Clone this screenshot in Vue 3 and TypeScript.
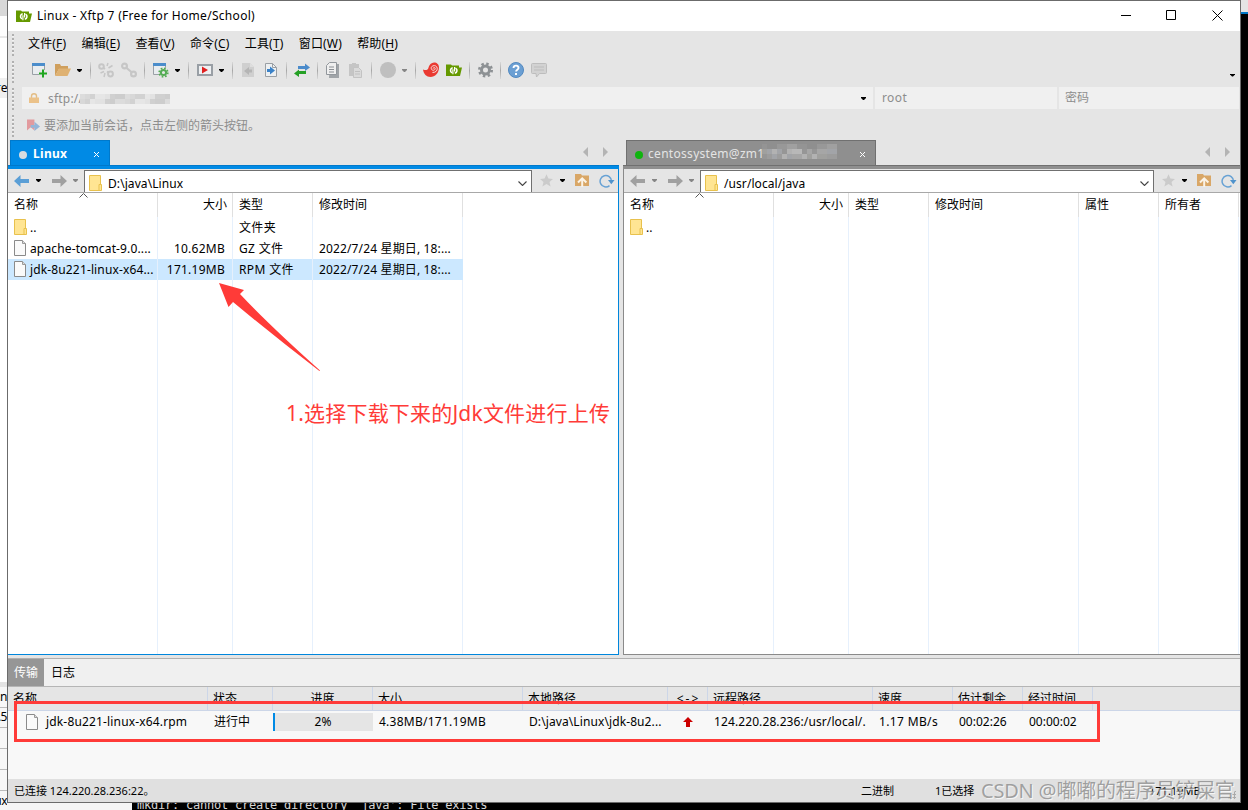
<script setup lang="ts">
interface Tool { kind: 'ic' | 'sep' | 'caret'; id?: string; wide?: boolean; dim?: boolean }
interface Row { name: string; icon: string; size: string; type: string; time: string; selected?: boolean }
interface Block { x: number; y: number; w: number; h: number; c: string }

const ic = (id: string, wide = false): Tool => ({ kind: 'ic', id, wide })
const sep: Tool = { kind: 'sep' }
const caret: Tool = { kind: 'caret' }

const menus = [
  ['文件', 'F'], ['编辑', 'E'], ['查看', 'V'], ['命令', 'C'], ['工具', 'T'], ['窗口', 'W'], ['帮助', 'H'],
]

const tools: Tool[] = [
  ic('new', true), ic('folder'), caret, sep,
  ic('unlink'), ic('link'), sep,
  ic('wingear', true), caret, sep,
  ic('play', true), caret, sep,
  ic('pageleft'), ic('pageright'), sep,
  ic('swap'), sep,
  ic('copy'), ic('paste'), sep,
  ic('disc', true), { kind: 'caret', dim: true }, sep,
  ic('spiral'), ic('xftp'), sep,
  ic('gear'), sep,
  ic('help'), ic('chat'),
]

const rows: Row[] = [
  { name: '..', icon: 'dir', size: '', type: '文件夹', time: '' },
  { name: 'apache-tomcat-9.0....', icon: 'file', size: '10.62MB', type: 'GZ 文件', time: '2022/7/24 星期日, 18:...' },
  { name: 'jdk-8u221-linux-x64...', icon: 'file', size: '171.19MB', type: 'RPM 文件', time: '2022/7/24 星期日, 18:...', selected: true },
]

const queueHeads = ['名称', '状态', '进度', '大小', '本地路径', '<->', '远程路径', '速度', '估计剩余', '经过时间']

const shades = ['#dcdcdc', '#d2d2d2', '#e2e2e2', '#cdcdcd', '#d8d8d8', '#e6e6e6', '#d0d0d0']
const addressMask: Block[] = []
for (let i = 0; i < 18; i++) {
  for (let j = 0; j < 2; j++) {
    addressMask.push({ x: i * 5, y: j * 5, w: 5, h: 5, c: shades[(i * 3 + j * 4 + (i % 4)) % 7] })
  }
}
const topGreys = ['#949494', '#a0a0a0', '#989898', '#8f8f8f']
const greys = ['#a6a6a6', '#9c9c9c', '#b2b2b2', '#a0a09e', '#b8b8b8', '#a2a4a8', '#969696']
const tabMask: Block[] = []
for (let i = 0; i < 15; i++) {
  for (let j = 0; j < 3; j++) {
    tabMask.push({ x: i * 5, y: j * 5, w: 5, h: 5, c: j === 0 ? topGreys[(i * 3 + (i >> 1)) % 4] : greys[(i * i + j * 3 + (i % 3)) % 7] })
  }
}
</script>

<template>
  <div class="desk">
    <svg class="sprite" aria-hidden="true">
      <symbol id="new" viewBox="0 0 16 16"><path d="M.5 1.500h12v11H.5z" fill="#e9edf0" stroke="#9aa0a6" /><path d="M0 1h13v3H0z" fill="#4b8dcb" /><path d="M7 8h8v7H7z" fill="#e5e5e5" /><path d="M11 7.500v8M7 11.500h8" stroke="#1fa51f" stroke-width="2" /></symbol>
      <symbol id="folder" viewBox="0 0 16 16"><path d="M0 2h5l1 2h7v3H4L0 14z" fill="#cf9f5d" /><path d="M4 6.500h12L12.500 14H0z" fill="#dfb273" /></symbol>
      <symbol id="unlink" viewBox="0 0 16 16"><g fill="none" stroke="#c6c6c6" stroke-width="2"><circle cx="3.500" cy="4.500" r="2.300" /><circle cx="12.500" cy="12" r="2.400" /><path d="M5.500 6l1.500 1M9 9.500l1.500 1" /><path d="M10 1l-1 3M14.500 3.500l-4 2.500M2.500 11l3.500-1.500M6 15l1-4" stroke-width="1.500" /></g></symbol>
      <symbol id="link" viewBox="0 0 16 16"><g fill="none" stroke="#c6c6c6" stroke-width="2.200"><circle cx="3.500" cy="4" r="2.400" /><circle cx="12.500" cy="12" r="2.400" /><path d="M5 5.500l6 5" /></g></symbol>
      <symbol id="wingear" viewBox="0 0 16 16"><path d="M.5 1.500h12v11H.5z" fill="#e9edf0" stroke="#9aa0a6" /><path d="M0 1h13v3H0z" fill="#4b8dcb" /><circle cx="10.500" cy="10.500" r="5" fill="#e5e5e5" /><circle cx="10.500" cy="10.500" r="2.600" fill="none" stroke="#55ad55" stroke-width="2" /><circle cx="10.500" cy="10.500" r="4.300" fill="none" stroke="#55ad55" stroke-width="1.700" stroke-dasharray="1.700 1.677" /></symbol>
      <symbol id="play" viewBox="0 0 16 16"><rect x="1" y="3" width="14" height="10" fill="#eef0f2" stroke="#999fa5" stroke-width="2" /><path d="M5 4.500v7l6-3.500z" fill="#e02020" /></symbol>
      <symbol id="pageleft" viewBox="0 0 16 16"><path d="M2 1h8l4 4v10H2z" fill="#cfcfcf" /><path d="M10 1v4h4" fill="#dedede" /><path d="M4 9l5-4v2.500h3v3H9V13z" fill="#b5b5b5" /></symbol>
      <symbol id="pageright" viewBox="0 0 16 16"><path d="M2.500 1.500h7l4 4v9h-11z" fill="#edf0f2" stroke="#9a9fa4" /><path d="M9.500 1.500v4h4" fill="none" stroke="#9a9fa4" /><path d="M12 8.500l-5-4V7H4v3h3v2.500z" fill="#3b82c8" /></symbol>
      <symbol id="swap" viewBox="0 0 16 16"><path d="M4 4h7V1.500L16 5.500 11 9V7H4z" fill="#4b8bcb" /><path d="M12 9H5V7.500l-5 4L5 15v-3h7z" fill="#25a025" /></symbol>
      <symbol id="copy" viewBox="0 0 16 16"><path d="M5 2h9v14H4z" fill="#a0a4a8" /><path d="M4.500.5h7v12h-10v-9z" fill="#efefef" stroke="#92979c" /><path d="M4 5h5M4 7.500h5M4 10h5" stroke="#8b8f94" /></symbol>
      <symbol id="paste" viewBox="0 0 16 16"><path d="M1 2h3V1h4v1h3v12H1z" fill="#c5c5c5" /><path d="M5.500 5.500h5l3 3v7h-8z" fill="#dadada" stroke="#c3c3c3" /><path d="M7 9.500h5M7 12h5" stroke="#c0c0c0" /></symbol>
      <symbol id="disc" viewBox="0 0 16 16"><circle cx="8" cy="8" r="8" fill="#bfbfbf" /></symbol>
      <symbol id="spiral" viewBox="0 0 16 16"><path d="M0 7.500c3 1 4.600.5 5.200-1C6 2.500 8.500.500 11 .500c3 0 5 2 5 5 0 5.500-4 9.500-8.500 9.500C3.500 15 .5 12 0 7.500z" fill="#ea3a32" /><path d="M9.500 10.500c3.500 0 5-2 4.700-4.300C13.800 2.500 8 3 8.200 6.300c.2 2.700 4 2.500 4 .2 0-1.300-2-1.200-2 0" fill="none" stroke="#f7dedc" stroke-width="1" /></symbol>
      <symbol id="xftp" viewBox="0 0 16 16"><path d="M0 2.500h5l1 1h7v2h3l-2 8.500H0z" fill="#659900" /><path d="M6.700 5.700a2.800 2.800 0 0 0-.7 5.200M8.800 11.300a2.800 2.800 0 0 0 .7-5.200" fill="none" stroke="#fff" stroke-width="1.600" /><path d="M6.900 7.200v5M8.600 5v4.500" stroke="#fff" stroke-width="1.200" /></symbol>
      <symbol id="gear" viewBox="0 0 16 16"><circle cx="8.500" cy="8" r="4" fill="none" stroke="#8d9194" stroke-width="3" /><circle cx="8.500" cy="8" r="6.200" fill="none" stroke="#8d9194" stroke-width="2.600" stroke-dasharray="2.400 2.470" /></symbol>
      <symbol id="help" viewBox="0 0 16 16"><circle cx="8" cy="8" r="7.500" fill="#6b9fd3" stroke="#5289c0" /><path d="M5.500 6c.2-3.200 5.200-3 5 0-.2 1.700-2.400 1.700-2.400 3.500M8 11v2" fill="none" stroke="#fff" stroke-width="1.900" /></symbol>
      <symbol id="chat" viewBox="0 0 16 16"><path d="M1.500 1.500h13q1 0 1 1v8q0 1-1 1H8.500L5.500 15l-.5-3.500H1.500q-1 0-1-1v-8q0-1 1-1z" fill="#d2d2d2" stroke="#bdbdbd" /><path d="M3 5h10M3 8h10" stroke="#bcbcbc" /></symbol>
      <symbol id="dir" viewBox="0 0 13 16"><path d="M.5.500h11v15H.5z" fill="#ffe593" stroke="#e8c14d" /><path d="M10 9.500h2.500v6H10z" fill="#ffe593" stroke="#e8c14d" /></symbol>
      <symbol id="file" viewBox="0 0 12 16"><path d="M.5.500h8l3 3v12H.5z" fill="#fafafa" stroke="#8a8a8a" /><path d="M8.500.500v3h3" fill="#ddd" stroke="#9a9a9a" /></symbol>
      <symbol id="back" viewBox="0 0 15 12"><path d="M0 6l6.500-6v4H15v4H6.500v4z" fill="currentColor" /></symbol>
      <symbol id="fwd" viewBox="0 0 15 12"><path d="M15 6L8.500 0v4H0v4h8.500v4z" fill="currentColor" /></symbol>
      <symbol id="star" viewBox="0 0 13 13"><path d="M6.500.300l1.900 4.200 4.600.4-3.500 3 1.100 4.700-4.100-2.500-4.100 2.500 1.100-4.700-3.500-3 4.600-.4z" fill="#cbcbcb" /></symbol>
      <symbol id="up" viewBox="0 0 14 13"><path d="M0 0h6l1 1.500h7V12H0z" fill="#d9a767" /><path d="M3 8.500L7.200 4.300l4.200 4.200M7.200 5v8" fill="none" stroke="#fbf3e6" stroke-width="2" /></symbol>
      <symbol id="refresh" viewBox="0 0 16 14"><path d="M10.500 11.600A5.700 5.700 0 1 1 12.500 7" fill="none" stroke="#68a2d4" stroke-width="1.500" /><path d="M9 6h6.500l-3.200 4.300z" fill="#4f93cc" /></symbol>
    </svg>

    <div class="behind left">
      <i class="s1"></i><i class="s2"></i><i class="s3"></i><span class="s4"><b>r</b>e</span>
      <i class="s5"></i><span class="s6">.n</span><span class="s7">.5</span><i class="s8"></i><i class="s8"></i><i class="s8"></i><span class="s9">ux</span>
    </div>

    <div class="center">
      <div class="win">
        <header class="title">
          <svg class="i16"><use href="#xftp" /></svg>
          <span class="cap">Linux - Xftp 7 (Free for Home/School)</span>
          <svg class="winbtns" viewBox="0 0 102 11"><path d="M0 5.500h10M45.500.500h9v9h-9zM91.500.500l10 10M101.500.500l-10 10" fill="none" stroke="#000" /></svg>
        </header>

        <section class="bars">
          <div class="grips"><i></i><i></i><i></i><i></i></div>
          <div class="barcol">
            <nav class="menu"><span v-for="m in menus" :key="m[1]">{{ m[0] }}(<u>{{ m[1] }}</u>)</span></nav>
            <div class="tools">
              <template v-for="(t, i) in tools" :key="i">
                <span v-if="t.kind === 'ic'" class="slot" :class="{ wide: t.wide }"><svg class="i16"><use :href="'#' + t.id" /></svg></span>
                <i v-else-if="t.kind === 'sep'" class="sep"></i>
                <i v-else class="caret" :class="{ dim: t.dim }"></i>
              </template>
              <i class="caret more"></i>
            </div>
            <div class="address">
              <div class="field host">
                <svg class="lock" viewBox="0 0 10 10"><path d="M2.500 5V3q0-2.300 2.500-2.300T7.500 3v2" fill="none" stroke="#e3bd85" stroke-width="1.400" /><path d="M0 4.500h10V10H0z" fill="#ebc28a" /></svg>
                <span>sftp://</span>
                <svg class="mask" viewBox="0 0 90 10"><rect v-for="(b, i) in addressMask" :key="i" :x="b.x" :y="b.y" :width="b.w" :height="b.h" :fill="b.c" /></svg>
                <i class="caret"></i>
              </div>
              <div class="field user">root</div>
              <div class="field pass">密码</div>
            </div>
            <div class="hint">
              <svg viewBox="0 0 14 13"><path d="M0 0h8v12l-4-3.500L0 12z" fill="#e29a9e" /><path d="M4 6h4V2.500l6 5-6 5V9H4z" fill="#94b5d8" /></svg>
              <span>要添加当前会话，点击左侧的箭头按钮。</span>
            </div>
          </div>
        </section>

        <main class="panes">
          <section class="pane local">
            <div class="tabs">
              <div class="tab on"><i class="dot"></i><b>Linux</b><svg class="x" viewBox="0 0 7 7"><path d="M1 1l5 5M6 1l-5 5" stroke="#fff" /></svg></div>
              <i class="tl"></i><i class="tr"></i>
            </div>
            <div class="rule"></div>
            <div class="inner">
              <div class="nav">
                <svg class="arr blue"><use href="#back" /></svg><i class="caret"></i>
                <svg class="arr"><use href="#fwd" /></svg><i class="caret dim"></i>
                <div class="combo"><svg class="dir"><use href="#dir" /></svg><span>D:\java\Linux</span><svg class="chev" viewBox="0 0 9 5"><path d="M.5.500l4 4 4-4" fill="none" stroke="#444" stroke-width="1.100" /></svg></div>
                <svg class="star"><use href="#star" /></svg><i class="caret"></i>
                <svg class="up"><use href="#up" /></svg><svg class="refresh"><use href="#refresh" /></svg>
              </div>
              <div class="list">
                <svg class="sort" viewBox="0 0 9 5"><path d="M.5 4.500l4-4 4 4" fill="none" stroke="#555" /></svg>
                <div class="row head"><span>名称</span><span class="num">大小</span><span>类型</span><span>修改时间</span></div>
                <div v-for="r in rows" :key="r.name" class="row" :class="{ sel: r.selected }">
                  <span class="nm"><svg :class="r.icon"><use :href="'#' + r.icon" /></svg>{{ r.name }}</span>
                  <span class="num">{{ r.size }}</span><span class="ty">{{ r.type }}</span><span class="tm">{{ r.time }}</span>
                </div>
                <div class="row fill"><span></span><span></span><span></span><span></span></div>
              </div>
            </div>
          </section>

          <section class="pane remote">
            <div class="tabs">
              <div class="tab">
                <i class="dot"></i><span class="peer">centossystem@zm1</span>
                <svg class="mask2" viewBox="0 0 75 15"><rect v-for="(b, i) in tabMask" :key="i" :x="b.x" :y="b.y" :width="b.w" :height="b.h" :fill="b.c" /></svg>
                <svg class="x" viewBox="0 0 7 7"><path d="M1 1l5 5M6 1l-5 5" stroke="#fff" /></svg>
              </div>
              <i class="tl"></i><i class="tr"></i>
            </div>
            <div class="rule"></div>
            <div class="inner">
              <div class="nav">
                <svg class="arr"><use href="#back" /></svg><i class="caret dim"></i>
                <svg class="arr"><use href="#fwd" /></svg><i class="caret dim"></i>
                <div class="combo"><svg class="dir"><use href="#dir" /></svg><span>/usr/local/java</span><svg class="chev" viewBox="0 0 9 5"><path d="M.5.500l4 4 4-4" fill="none" stroke="#444" stroke-width="1.100" /></svg></div>
                <svg class="star"><use href="#star" /></svg><i class="caret"></i>
                <svg class="up"><use href="#up" /></svg><svg class="refresh"><use href="#refresh" /></svg>
              </div>
              <div class="list">
                <svg class="sort" viewBox="0 0 9 5"><path d="M.5 4.500l4-4 4 4" fill="none" stroke="#555" /></svg>
                <div class="row head"><span>名称</span><span class="num">大小</span><span>类型</span><span>修改时间</span><span>属性</span><span>所有者</span></div>
                <div class="row"><span class="nm"><svg class="dir"><use href="#dir" /></svg>..</span><span></span><span></span><span></span><span></span><span></span></div>
                <div class="row fill"><span></span><span></span><span></span><span></span><span></span><span></span></div>
              </div>
            </div>
          </section>
        </main>

        <section class="queue">
          <div class="qtabs"><span class="on">传输</span><span class="log">日志</span></div>
          <div class="qrow qhead"><span v-for="h in queueHeads" :key="h">{{ h }}</span></div>
          <div class="qrow">
            <span class="qn"><svg class="file"><use href="#file" /></svg>jdk-8u221-linux-x64.rpm</span>
            <span>进行中</span>
            <span class="prog">2%</span>
            <span class="qs">4.38MB/171.19MB</span><span class="ql">D:\java\Linux\jdk-8u2...</span>
            <span class="qa"><svg viewBox="0 0 10 10"><path d="M5 0l5 5H7v5H3V5H0z" fill="#c00" /></svg></span>
            <span class="qr">124.220.28.236:/usr/local/.</span><span class="qv">1.17 MB/s</span><span class="qt">00:02:26</span><span class="qt">00:00:02</span>
          </div>
        </section>

        <footer class="status">
          <span class="conn">已连接 124.220.28.236:22。</span><span class="mode">二进制</span><span class="picked">1已选择</span><span class="total">171.19MB</span>
          <i class="resize"></i>
        </footer>
      </div>
      <div class="under"><div class="term">mkdir: cannot create directory `java': File exists</div></div>
    </div>

    <div class="behind right"><i></i><i></i></div>

    <svg class="pointer" viewBox="0 0 101 88"><path d="M0 0l25 7-4 4Q50 42 101 87.500l-.6.5Q56 54 14 19l-4.500 5z" fill="#ff3b38" /></svg>
    <div class="note">1.选择下载下来的Jdk文件进行上传</div>
    <div class="redbox"></div>
    <div class="watermark">CSDN @嘟嘟的程序员铲屎官</div>
  </div>
</template>

<style>
html, body { margin: 0; overflow: hidden; }
</style>

<style scoped>
* { box-sizing: border-box; }
svg { display: block; flex: none; }
.desk { position: relative; width: 1248px; height: 810px; display: flex; overflow: hidden; background: #000; font: 12px/16px "Noto Sans", "Noto Sans CJK SC", sans-serif; color: #000; white-space: nowrap; }
.sprite { position: absolute; width: 0; height: 0; }
.i16 { width: 16px; height: 16px; }
.behind.left { width: 7px; background: #fff; overflow: hidden; display: flex; flex-direction: column; }
.behind.left > span { font-size: 12px; display: flex; justify-content: flex-end; flex: none; letter-spacing: -.5px; }
.s1 { height: 16px; background: #d8d8d8; flex: none; }
.s2 { height: 20px; background: #fdfdfd; flex: none; }
.s3 { height: 2px; background: #e8e8e8; flex: none; margin-bottom: 40px; }
.s4 { height: 20px; background: #f0f0f0; line-height: 19px; }
.s4 b { font-weight: 400; color: #1c7cd6; }
.s5 { height: 5px; background: #e3e3e3; margin-top: 584px; flex: none; }
.s6 { height: 21px; border-bottom: 1px solid #bbb; line-height: 20px; background: #f7f7f7; }
.s7 { height: 20px; border-bottom: 1px solid #bbb; line-height: 18px; background: #f7f7f7; }
.s8 { height: 21px; border-bottom: 1px solid #bbb; background: #f7f7f7; flex: none; }
.s9 { height: 21px; line-height: 20px; background: #f7f7f7; }
.center { width: 1234px; display: flex; flex-direction: column; flex: none; }
.behind.right { flex: 1; }
.behind.right i { display: block; height: 12px; background: #e5e5e5; }
.behind.right i + i { height: 2px; background: #0078c8; }
.win { height: 803px; border: 1px solid #6b6b6b; background: #e5e5e5; display: flex; flex-direction: column; position: relative; z-index: 1; }
.under { height: 7px; background: #f5f5f5; }
.term { margin-left: 125px; height: 7px; background: #000; color: #d8d8d8; font: 12px/10px "DejaVu Sans Mono", monospace; letter-spacing: -.22px; padding-left: 5px; display: flex; align-items: flex-end; }
.title { height: 30px; background: #fff; display: flex; align-items: center; padding: 0 17px 0 8px; flex: none; }
.cap { margin-left: 5px; flex: 1; letter-spacing: .3px; }
.winbtns { width: 102px; height: 11px; margin-top: -1px; }
.bars { height: 109px; display: flex; flex: none; }
.grips { width: 14px; padding: 3px 0 0 4px; }
.grips i { display: block; width: 2px; height: 22px; margin-bottom: 5px; background: repeating-linear-gradient(#b0b0b0 0 2px, #f2f2f2 2px 3px, #e5e5e5 3px 4px); }
.barcol { flex: 1; }
.menu { height: 26px; display: flex; align-items: center; padding-left: 6px; gap: 15.3px; letter-spacing: .15px; }
.menu u { text-underline-offset: 2px; }
.tools { height: 26px; display: flex; align-items: center; padding-left: 9px; gap: 7px; }
.slot { display: flex; justify-content: flex-end; width: 16px; }
.slot.wide { width: 17px; }
.sep { width: 1px; height: 17px; background: linear-gradient(#d8d8d8, #a8a8a8 50%, #d8d8d8); }
.caret { width: 5px; height: 3px; background: #000; clip-path: polygon(0 0, 100% 0, 100% 34%, 60% 100%, 40% 100%, 0 34%); margin: 1px 1px 0 -1px; flex: none; }
.caret.dim { background: #858585; }
.caret.more { margin: 10px 5px 0 auto; }
.address { display: flex; height: 22px; margin-top: 4px; gap: 2px; padding-right: 1px; color: #8d8d8d; }
.field { background: #f0f0f0; display: flex; align-items: center; }
.host { width: 851px; padding: 0 7px; }
.host span { letter-spacing: .2px; width: 35px; padding-top: 1px; }
.lock { width: 10px; height: 10px; margin-right: 9px; }
.mask { width: 90px; height: 10px; margin: 2px auto 0 -3px; }
.host .caret { margin-right: 0; }
.user { width: 182px; padding-left: 7px; letter-spacing: .4px; }
.pass { flex: 1; padding-left: 6px; }
.hint { display: flex; align-items: center; height: 31px; padding: 2px 0 0 5px; color: #8d8d8d; }
.hint svg { width: 13px; height: 13px; margin-right: 4px; }

.panes { display: flex; gap: 4px; height: 515px; flex: none; }
.pane { display: flex; flex-direction: column; }
.local { width: 611px; }
.remote { flex: 1; }
.tabs { height: 25px; display: flex; align-items: flex-end; padding: 0 11px 0 2px; flex: none; }
.tab { height: 25px; width: 100px; display: flex; align-items: center; background: #008ae5; border: 1px solid #0079cb; border-bottom: 0; color: #fff; padding: 2px 9px 0 8px; margin-right: auto; }
.dot { width: 8px; height: 8px; border-radius: 50%; background: #d7dce0; margin-right: 6px; flex: none; margin-top: 2px; }
.tab b { flex: 1; font-size: 12px; letter-spacing: .3px; }
.x { width: 7px; height: 7px; }
.tl, .tr { width: 5px; height: 10px; background: #b4b4b4; margin: 0 0 8px 15px; }
.tl { clip-path: polygon(100% 0, 0 50%, 100% 100%); }
.tr { clip-path: polygon(0 0, 100% 50%, 0 100%); }
.rule { height: 4px; background: #008ae5; border-top: 1px solid #0079cb; flex: none; }
.inner { flex: 1; display: flex; flex-direction: column; border-right: 1px solid #0086dc; border-bottom: 1px solid #0086dc; min-height: 0; }
.remote .tabs { padding: 0 10px 0 3px; }
.remote .tab { width: 250px; background: #8f8f8f; border-color: #707070; }
.remote .dot { background: #0fb40f; margin-right: 5px; }
.peer { color: #e4e4e4; letter-spacing: .3px; }
.mask2 { width: 75px; height: 15px; margin: -5px auto 0 -3px; }
.remote .rule { background: #8f8f8f; border-color: #707070; }
.remote .inner { border: 0; border-left: 1px solid #8a8a8a; border-bottom: 1px solid #8a8a8a; }
.nav { height: 24px; display: flex; align-items: center; padding: 0 4px 0 6px; border-bottom: 1px solid #a8a8a8; }
.arr { width: 15px; height: 12px; color: #a0a0a0; }
.arr.blue { color: #5b9fd6; }
.nav .caret { margin: 0 0 0 7px; }
.caret + .arr { margin-left: 11px; }
.nav .arr + .caret.dim { margin-left: 6px; }
.remote .nav .arr:first-child + .caret { margin-left: 7px; }
.combo { flex: 1; height: 22px; margin: 1px 8px 0 6px; align-self: flex-start; background: #fff; border: 1px solid #707070; border-bottom: 0; display: flex; align-items: center; padding: 2px 4px 0; }
.dir { width: 13px; height: 16px; }
.combo span { margin-left: 6px; flex: 1; letter-spacing: .08px; padding-top: 2px; }
.chev { width: 9px; height: 5px; margin-top: 2px; }
.star { width: 13px; height: 13px; }
.up { width: 14px; height: 13px; margin-left: 10px; }
.refresh { width: 16px; height: 14px; margin-left: 10px; margin-right: -1px; }
.list { flex: 1; background: #fff; display: flex; flex-direction: column; position: relative; min-height: 0; }
.sort { position: absolute; left: 71px; top: 0; width: 9px; height: 5px; }
.row { display: grid; grid-template-columns: 150px 75px 80px 150px; height: 21px; line-height: 21px; flex: none; width: 455px; }
.remote .row { grid-template-columns: 150px 75px 80px 150px 80px 80px; width: 615px; }
.row > span { border-right: 1px solid #e6f0fc; padding-left: 6px; overflow: hidden; }
.row > .num { text-align: right; padding: 0 7px 0 0; letter-spacing: .25px; }
.row.head { height: 24px; line-height: 24px; }
.row.head > span { border-color: #e0e0e0; }
.row.head > .num { padding-right: 5px; letter-spacing: 0; }
.row.fill { flex: 1; }
.row > .nm { display: flex; align-items: center; padding-left: 6px; letter-spacing: .14px; }
.ty { letter-spacing: .35px; }
.tm { letter-spacing: .14px; }
.nm .dir { margin-right: 3px; }
.nm svg { margin-top: -1px; }
.file { width: 12px; height: 16px; margin-right: 4px; }
.sel { background: #cce8ff; }
.sel > span:last-child { border-color: #cce8ff; }

.queue { height: 121px; background: #f8f8f8; border-top: 1px solid #b0b0b0; margin-top: 3px; flex: none; }
.qtabs { height: 28px; background: #f0f0f0; border-bottom: 1px solid #b5b5b5; display: flex; line-height: 27px; }
.qtabs span { width: 36px; text-align: center; }
.qtabs .log { width: 38px; }
.qtabs .on { background: #969696; color: #fff; }
.qrow { display: grid; grid-template-columns: 200px 65px 100px 150px 145px 40px 165px 80px 70px 70px; height: 22px; line-height: 22px; }
.qrow > span { padding-left: 6px; overflow: hidden; }
.qhead { height: 24px; line-height: 24px; background: #e5e5e5; border-bottom: 1px solid #ccd6e8; }
.qhead > span { border-right: 1px solid #ccd6e8; padding-left: 5px; }
.qhead > span:nth-child(3), .qhead > span:nth-child(6) { text-align: center; padding: 0; }
.qhead > span:nth-child(6) { letter-spacing: 2px; padding-left: 2px; }
.qrow > .qn { display: flex; align-items: center; padding-left: 18px; letter-spacing: .16px; }
.qn .file { margin-right: 8px; }
.qrow > .prog { background: #e5e5e5; border-left: 2px solid #008ae5; height: 18px; line-height: 18px; margin-top: 2px; text-align: center; padding: 0 2px 0 0; }
.qs { letter-spacing: .25px; }
.ql, .qr { letter-spacing: .1px; }
.qv { letter-spacing: .35px; }
.qrow > .qa { display: flex; align-items: center; justify-content: center; padding: 0; }
.qa svg { width: 10px; height: 10px; }
.status { flex: 1; background: #e0e0e0; display: flex; align-items: center; font-size: 11px; padding: 0 0 0 6px; }
.mode { margin-left: auto; margin-right: 41px; }
.picked { width: 214px; }
.total { width: 78px; }
.resize { width: 9px; height: 9px; margin: 8px 4px 0 0; background: radial-gradient(#aaa 1px, transparent 1.300px) 0 0 / 3px 3px; clip-path: polygon(100% 0, 100% 100%, 0 100%); }

.pointer { position: absolute; z-index: 2; left: 219px; top: 283px; width: 101px; height: 88px; }
.note { position: absolute; z-index: 2; left: 286px; top: 399px; font-size: 21px; line-height: 28px; color: #ff3b38; letter-spacing: .2px; }
.redbox { position: absolute; z-index: 2; left: 14px; top: 701px; width: 1086px; height: 41px; border: 3px solid #ff3b38; }
.watermark { position: absolute; z-index: 2; left: 981px; top: 778px; font-size: 20px; line-height: 26px; letter-spacing: -.2px; color: rgba(135, 135, 135, .75); text-shadow: 1px 1px 0 rgba(255, 255, 255, .7); }
</style>
